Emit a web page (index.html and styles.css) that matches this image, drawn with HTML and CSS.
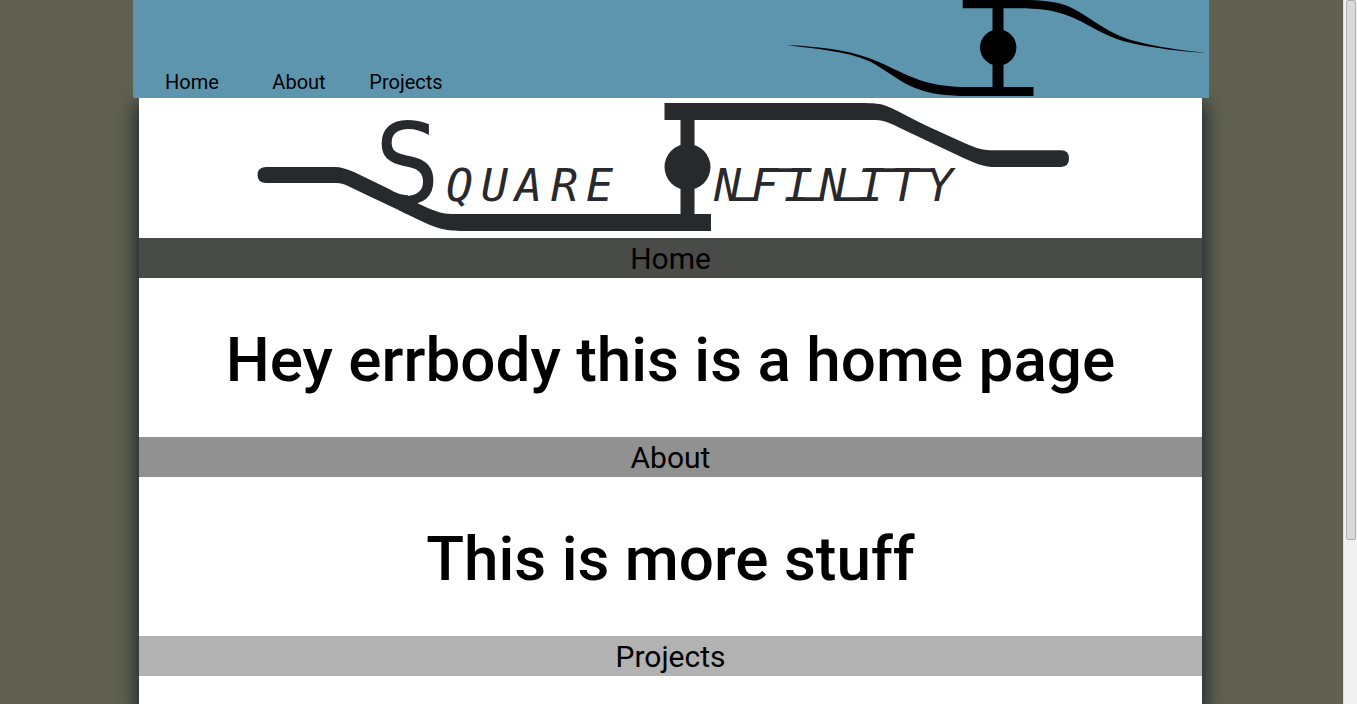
FILE: index.html
```html
<!DOCTYPE html>
<html lang="en">
<head>
<meta charset="utf-8">
<title>Square Infinity</title>
<link rel="stylesheet" href="styles.css">
</head>
<body>
<div class="page">
  <header class="header">
    <nav class="nav">
      <a href="#home">Home</a>
      <a href="#about">About</a>
      <a href="#projects">Projects</a>
    </nav>
    <svg class="emblem" viewBox="786 0 423 98" aria-hidden="true">
      <path d="M962.700 0H1022C1042 0 1057 1.500 1070 7C1082 12.500 1091 20 1103 27C1112 32.500 1121 37 1133 40.500C1156 47 1180 50 1206 53C1180 51.500 1155 48 1133 43.500C1120 40.500 1111 37 1103 33C1090 27 1082 21 1070 16.500C1056 10.500 1040 8.300 1017 8.300H1003.500V87H1033.500V96H970C945 96 930 94 915 88C900 82 884 69 870 61.500C845 50.500 815 49 787 45C815 46.500 845 49 870 58.500C886 64.500 900 72.500 913 77.500C930 84.500 948 87 967 87H992.500V8.300H962.700Z"/>
      <circle cx="998.200" cy="47.500" r="18.200"/>
    </svg>
  </header>
  <main class="content">
    <svg class="logo" viewBox="139 98 1063 140" role="img" aria-label="Square Infinity">
      <path d="M265.500 167H334C341 167 347 169 354 172L388 188.500C396 193 401 195 407 195L418 203.500C430 209 440 214 452 214H680.500V120H664.500V103H850C864 103 876 103 882 104.500C895 108.500 912 119 927 126L960 141C972 146.500 981 150.300 990 150.300H1061Q1069 150.300 1069 158.500T1061 167H992C980 166.500 968 160 955 154L900 128C892 124 884 120 876 120H694.500V214H711V231H475C452 231 445 231 430 225C414 218 395 208 373 198L350 187C345 184.500 341 183 336 183H265.500Q257.500 182.500 257.500 175T265.500 167Z"/>
      <circle cx="687.500" cy="167" r="23"/>
      <text class="logo-initial" x="375" y="203">S</text>
      <text class="logo-word" x="446 481 515 551 586" y="201">QUARE</text>
      <text class="logo-word" x="714 751 784 819 858 891 926" y="201">NFINITY</text>
      <path d="M760 168.200H812L811 172H760ZM733 197.300H757L756 201H733ZM787 197.300H824L823 201H786ZM838 197.300H877L876 201H838ZM863 168.200H934V172H862Z"/>
    </svg>
    <h2 class="bar bar-home" id="home">Home</h2>
    <h1 class="statement">Hey errbody this is a home page</h1>
    <h2 class="bar bar-about" id="about">About</h2>
    <h1 class="statement">This is more stuff</h1>
    <h2 class="bar bar-projects" id="projects">Projects</h2>
  </main>
</div>
<div class="scroll-track"><div class="scroll-thumb"></div></div>
</body>
</html>
```
FILE: styles.css
```css
body {
  display: flex;
  height: 100vh;
  margin: 0;
  overflow: hidden;
  background: #606150;
  color: #000;
  font-family: Roboto, sans-serif;
}

.page {
  display: flex;
  flex: 1;
  flex-direction: column;
  margin: 0 134px 0 133px;
}

.header {
  display: flex;
  z-index: 1;
  flex-shrink: 0;
  align-items: flex-end;
  justify-content: space-between;
  background: #5d95af;
}

.nav {
  display: flex;
  gap: 11px;
  padding-left: 11px;
}

.nav a {
  width: 96px;
  color: #000;
  font-size: 20px;
  line-height: 32px;
  text-align: center;
  text-decoration: none;
}

.emblem {
  display: block;
  height: 98px;
}

.content {
  flex: 1;
  margin: 0 7px 0 6px;
  background: #fff;
  box-shadow: 0 8px 18px 3px #14262c;
}

.logo {
  display: block;
  width: 100%;
  fill: #28292d;
}

.logo-initial {
  font-family: "DejaVu Sans Condensed", "DejaVu Sans", sans-serif;
  font-size: 112px;
}

.logo-word {
  font-family: "DejaVu Sans Mono", monospace;
  font-size: 45px;
  font-style: italic;
}

.bar {
  margin: 0;
  padding-top: 2px;
  font-size: 30px;
  font-weight: 400;
  line-height: 38px;
  text-align: center;
}

.bar-home {
  background: #494b49;
}

.bar-about {
  background: #919191;
}

.bar-projects {
  background: #b2b2b2;
}

.statement {
  margin: 0;
  padding: 42px 0 37px;
  font-size: 62px;
  font-weight: 500;
  line-height: 80px;
  text-align: center;
}

.scroll-track {
  box-sizing: border-box;
  width: 14px;
  padding: 0 1px 0 2px;
  border-left: 1px solid #dcdcdc;
  background: #f1f1f1;
}

.scroll-thumb {
  box-sizing: border-box;
  height: 540px;
  border: 1px solid #b0b0b0;
  border-radius: 2px;
  background: #d9d9d9;
}
```
